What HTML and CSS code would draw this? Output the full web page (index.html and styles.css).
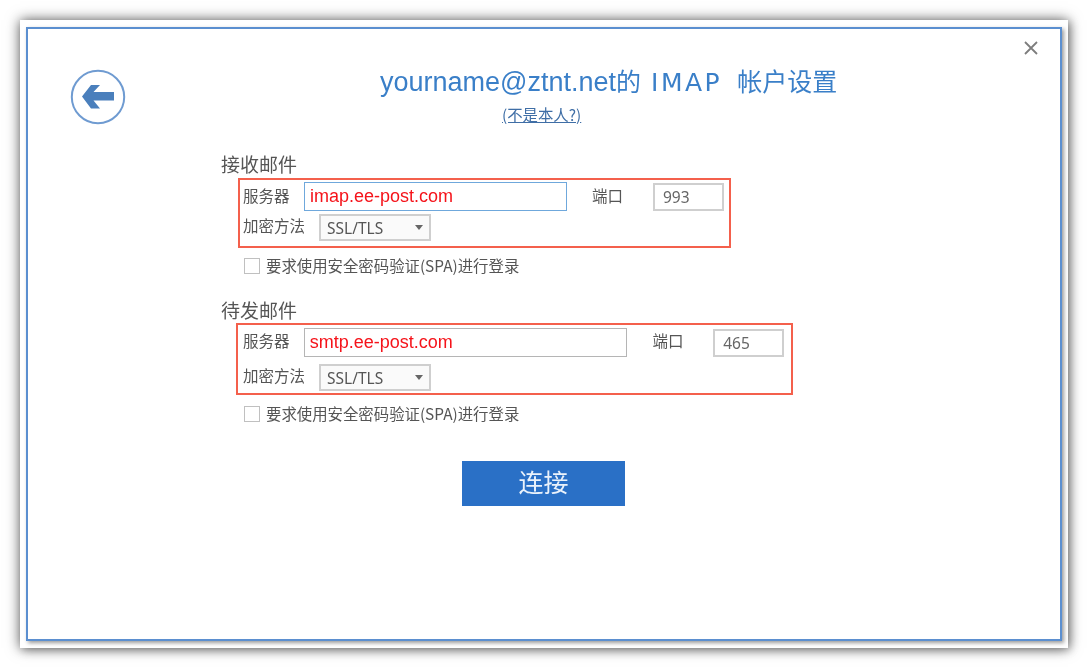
FILE: index.html
```html
<!DOCTYPE html>
<html lang="zh-CN">
<head>
<meta charset="utf-8">
<title>IMAP 帐户设置</title>
<link rel="stylesheet" href="styles.css">
</head>
<body>
<div class="window">
  <div class="dialog">
    <header class="head">
      <svg class="back" viewBox="0 0 56 56" width="56" height="56" aria-hidden="true">
        <circle cx="28" cy="28" r="26.2" fill="none" stroke="#6f9bd1" stroke-width="2"/>
        <path d="M12 27.5 L21 16 L30 16 L23.5 23 L44 23 L44 31.5 L23.5 31.5 L30 39.5 L21 39.5 Z" fill="#4a7fbc"/>
      </svg>
      <div class="titles">
        <h1 class="title"><span class="latin">yourname@ztnt.net</span>的<span class="imap">IMAP</span>帐户设置</h1>
        <a class="whoami">(不是本人?)</a>
      </div>
      <svg class="close" viewBox="0 0 14 14" width="14" height="14" aria-hidden="true">
        <path d="M1 1 L13 13 M13 1 L1 13" stroke="#7d7d7d" stroke-width="1.8" fill="none"/>
      </svg>
    </header>

    <section class="group group-in">
      <h2 class="group-title">接收邮件</h2>
      <div class="box box-in">
        <div class="row row-server">
          <span class="lbl lbl-server">服务器</span>
          <span class="field field-host host-in focus">imap.ee-post.com</span>
          <span class="lbl lbl-port">端口</span>
          <span class="field field-port">993</span>
        </div>
        <div class="row row-enc">
          <span class="lbl lbl-enc">加密方法</span>
          <span class="select">SSL/TLS<i class="caret"></i></span>
        </div>
      </div>
      <label class="check"><span class="tick"></span>要求使用安全密码验证(SPA)进行登录</label>
    </section>

    <section class="group group-out">
      <h2 class="group-title">待发邮件</h2>
      <div class="box box-out">
        <div class="row row-server">
          <span class="lbl lbl-server">服务器</span>
          <span class="field field-host host-out">smtp.ee-post.com</span>
          <span class="lbl lbl-port">端口</span>
          <span class="field field-port">465</span>
        </div>
        <div class="row row-enc">
          <span class="lbl lbl-enc">加密方法</span>
          <span class="select">SSL/TLS<i class="caret"></i></span>
        </div>
      </div>
      <label class="check"><span class="tick"></span>要求使用安全密码验证(SPA)进行登录</label>
    </section>

    <div class="actions"><button class="connect" type="button">连接</button></div>
  </div>
</div>
</body>
</html>
```

FILE: styles.css
```css
* { box-sizing: border-box; }
html, body { margin: 0; height: 100%; background: #fff; overflow: hidden; }
body {
  padding: 20px;
  font-family: "Noto Sans CJK SC", "Liberation Sans", sans-serif;
  color: #555;
}
.window {
  width: 1048px;
  height: 628px;
  padding: 7px 6px;
  background: #fff;
  box-shadow: 0 0 13px rgba(0,0,0,.6), 2px 2px 8px rgba(0,0,0,.25);
}
.dialog {
  height: 614px;
  border: 2px solid #5b8fd0;
  background: #fff;
  box-shadow: 2px 2px 4px rgba(0,0,0,.4);
  filter: blur(.5px);
}
.head {
  display: grid;
  grid-template-columns: 56px 1fr 14px;
  align-items: start;
  padding: 11px 22px 0 42px;
  height: 121px;
}
.back { margin-top: 29px; }
.close { margin-top: 1px; }
.titles { display: flex; flex-direction: column; align-items: flex-start; padding: 22px 0 0 254px; }
.title {
  margin: 0;
  font-size: 25px;
  font-weight: 400;
  line-height: 36px;
  color: #3a7fc8;
  white-space: nowrap;
}
.latin { font-family: "Liberation Sans", sans-serif; font-size: 27px; }
.imap { margin: 0 15px 0 10px; font-family: "DejaVu Sans", sans-serif; letter-spacing: 2.5px; }
.whoami {
  margin: 4px 0 0 122px;
  font-size: 15.4px;
  line-height: 18px;
  color: #3f6ea6;
  text-decoration: underline;
}
.group { margin-left: 193px; }
.group-in { margin-top: 1px; }
.group-out { margin-top: 22px; }
.group-title {
  margin: 0;
  font-size: 19px;
  font-weight: 400;
  line-height: 26px;
  color: #555;
}
.box { border: 2px solid #f4604c; }
.box-in { width: 493px; height: 70px; margin: 1px 0 0 17px; padding: 2px 5px 2px 3px; }
.box-out { width: 557px; height: 72px; margin: 0 0 0 15px; padding: 3px 7px 3px 5px; }
.row { display: flex; align-items: center; }
.lbl { font-size: 15.5px; line-height: 20px; color: #555; white-space: nowrap; }
.lbl-server { width: 61px; margin-bottom: 4px; }
.lbl-enc { width: 76px; margin-bottom: 5px; }
.lbl-port { width: 61px; margin-left: 25px; margin-bottom: 4px; }
.box-out .lbl-server, .box-out .lbl-port { margin-bottom: 6px; }
.box-out .lbl-enc { margin-bottom: 6px; }
.field {
  display: flex;
  align-items: center;
  height: 29px;
  background: #fff;
  border: 1px solid #b5b5b5;
}
.field-host {
  padding-left: 5px;
  font-family: "Liberation Sans", sans-serif;
  font-size: 18px;
  color: #f5131a;
}
.host-in { width: 263px; }
.host-out { width: 325px; }
.focus { border: 1.5px solid #6fa8dc; }
.field-port {
  width: 71px;
  height: 28px;
  padding-left: 8px;
  border: 2px solid #cfcfcf;
  font-family: "Noto Sans", "Liberation Sans", sans-serif;
  font-size: 15.5px;
  color: #666;
}
.row-enc { margin-top: 3px; }
.box-out .row-enc { margin-top: 7px; }
.select {
  position: relative;
  display: flex;
  align-items: center;
  width: 112px;
  height: 27px;
  padding-left: 6px;
  border: 2px solid #cfcfcf;
  font-family: "Noto Sans", "Liberation Sans", sans-serif;
  font-size: 15.5px;
  color: #555;
  background: #fafafa;
}
.caret {
  position: absolute;
  right: 6px;
  top: 9px;
  border-left: 4px solid transparent;
  border-right: 4px solid transparent;
  border-top: 5px solid #666;
}
.check {
  display: flex;
  align-items: center;
  gap: 6px;
  margin: 7px 0 0 23px;
  font-size: 15.4px;
  line-height: 20px;
  color: #555;
  white-space: nowrap;
}
.group-out .check { margin-top: 8px; }
.tick {
  width: 16px;
  height: 16px;
  margin-top: 2px;
  border: 1.5px solid #c0c0c0;
  background: #fff;
}
.actions { margin: 38px 0 0 434px; }
.connect {
  display: block;
  width: 163px;
  height: 45px;
  padding: 0 0 5px;
  border: 0;
  background: #2a70c6;
  color: #eaf2fb;
  font-family: inherit;
  font-size: 25px;
  line-height: 40px;
}
```
